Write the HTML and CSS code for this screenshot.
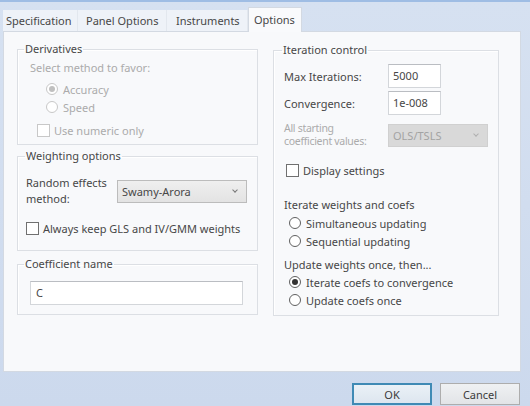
FILE: index.html
```html
<!DOCTYPE html>
<html>
<head>
    <meta charset="utf-8">
    <title>Options</title>
    <link rel="stylesheet" href="styles.css">
</head>
<body>
  <div class="dialog">
    <div class="tabs">
        <span class="tab">Specification</span>
        <span class="tab">Panel Options</span>
        <span class="tab">Instruments</span>
        <span class="tab active">Options</span>
    </div>

    <div class="panel">
        <div class="col left-col">
            <fieldset class="group deriv">
                <legend>Derivatives</legend>
                <div class="row disabled r-select">Select method to favor:</div>
                <div class="row disabled r-acc"><span class="radio on"></span>Accuracy</div>
                <div class="row disabled r-speed"><span class="radio"></span>Speed</div>
                <div class="row disabled r-numeric"><span class="check"></span>Use numeric only</div>
            </fieldset>

            <fieldset class="group weight">
                <legend>Weighting options</legend>
                <div class="row r-method">
                    <label class="two-line">Random effects<br>method:</label>
                    <div class="select">Swamy-Arora<span class="chev"></span></div>
                </div>
                <div class="row r-keep"><span class="check"></span>Always keep GLS and IV/GMM weights</div>
            </fieldset>

            <fieldset class="group coef">
                <legend>Coefficient name</legend>
                <div class="textbox wide">C</div>
            </fieldset>
        </div>

        <div class="col right-col">
            <fieldset class="group iter">
                <legend>Iteration control</legend>
                <div class="row r-max">
                    <label class="field-label">Max Iterations:</label>
                    <div class="textbox small">5000</div>
                </div>
                <div class="row r-conv">
                    <label class="field-label">Convergence:</label>
                    <div class="textbox small">1e-008</div>
                </div>
                <div class="row r-start">
                    <label class="field-label disabled tight">All starting<br>coefficient values:</label>
                    <div class="select off">OLS/TSLS<span class="chev"></span></div>
                </div>
                <div class="row r-display"><span class="check"></span>Display settings</div>

                <div class="row r-head1">Iterate weights and coefs</div>
                <div class="row opt"><span class="radio"></span>Simultaneous updating</div>
                <div class="row opt"><span class="radio"></span>Sequential updating</div>

                <div class="row r-head2">Update weights once, then...</div>
                <div class="row opt"><span class="radio on"></span>Iterate coefs to convergence</div>
                <div class="row opt"><span class="radio"></span>Update coefs once</div>
            </fieldset>
        </div>
    </div>

    <div class="buttons">
        <button class="btn default">OK</button>
        <button class="btn">Cancel</button>
    </div>
  </div>
</body>
</html>
```

FILE: styles.css
```css
body {
    margin: 0;
    font-family: "Noto Sans", "Open Sans", sans-serif;
    font-size: 11px;
    color: #474747;
}

.dialog {
    width: 530px;
    height: 406px;
    box-sizing: border-box;
    border-top: 2px solid #9fbde4;
    background: linear-gradient(#d6e1f1, #ccd9ed);
    overflow: hidden;
}

/* tab strip */
.tabs {
    display: flex;
    align-items: flex-end;
    height: 29px;
    margin-left: 3px;
}

.tab {
    height: 21px;
    line-height: 21px;
    padding: 0 5px;
    background-color: #eef2f8;
    border-right: 1px solid #e2e7ee;
}

.tab:nth-child(1) { width: 66px; padding-left: 3px; }
.tab:nth-child(2) { width: 75px; padding-left: 8px; }
.tab:nth-child(3) { width: 66px; padding-left: 9px; }

.tab.active {
    height: 24px;
    line-height: 23px;
    width: 42px;
    padding: 0 5px;
    margin-bottom: -1px;
    background-color: #f9fafc;
    border: 1px solid #d3d9e2;
    border-bottom: none;
    position: relative;
}

/* main panel */
.panel {
    display: flex;
    gap: 15px;
    width: 518px;
    height: 341px;
    box-sizing: border-box;
    margin-left: 3px;
    padding: 10px 0 0 13px;
    background-color: #f8f9fb;
    border: 1px solid #d3d9e2;
}

.left-col { width: 241px; }
.right-col { width: 226px; padding-top: 1px; }

.group {
    margin: 0;
    padding: 0;
    border: 1px solid #dcdfe4;
    box-shadow: inset 1px 1px 0 #ffffff;
    min-width: 0;
}

.group legend {
    padding: 0 1px;
    line-height: 14px;
}

.row {
    display: flex;
    align-items: center;
    height: 18px;
    white-space: nowrap;
}

.disabled { color: #ababab; }

/* derivatives */
.deriv { padding: 2px 0 5px 12px; height: 103px; box-sizing: border-box; }
.deriv legend { margin-left: -6px; }
.r-acc { margin-top: 4px; padding-left: 16px; }
.r-speed { padding-left: 16px; }
.r-numeric { margin-top: 5px; padding-left: 7px; }

/* weighting */
.weight { margin-top: 4px; padding: 12px 0 13px 8px; }
.weight legend { margin-left: -1px; }
.r-method { height: 32px; }
.two-line { width: 91px; line-height: 16px; }
.r-keep { margin-top: 12px; }

.coef { margin-top: 6px; padding: 10px 0 9px 12px; }
.coef legend { margin-left: -6px; }

/* right column */
.iter { padding: 7px 0 6px 10px; }
.iter legend { margin-left: -2px; }
.field-label { width: 104px; }
.tight { line-height: 13px; font-size: 10.5px; letter-spacing: -0.3px; }
.r-max, .r-conv { height: 24px; }
.r-conv { margin-top: 3px; }
.r-start { height: 26px; margin-top: 7px; }
.r-display { margin-top: 13px; padding-left: 2px; }
.r-head1 { margin-top: 16px; }
.r-head2 { margin-top: 5px; }
.opt { padding-left: 5px; }
.r-head1 + .opt { margin-top: 1px; }

/* controls */
.check {
    width: 11px;
    height: 11px;
    border: 1px solid #707070;
    background-color: #fff;
    margin-right: 4px;
}

.disabled .check { border-color: #c8c8c8; }

.radio {
    width: 10px;
    height: 10px;
    border: 1px solid #606060;
    border-radius: 50%;
    background-color: #fff;
    margin-right: 5px;
    position: relative;
}

.disabled .radio { border-color: #c8c8c8; }

.radio.on::after {
    content: "";
    position: absolute;
    left: 2px;
    top: 2px;
    width: 6px;
    height: 6px;
    border-radius: 50%;
    background-color: #333;
}

.disabled .radio.on::after { background-color: #c0c0c0; }

.textbox {
    box-sizing: border-box;
    height: 24px;
    line-height: 22px;
    padding-left: 4px;
    background-color: #fff;
    border: 1px solid #d3d6da;
    border-top-color: #babdc2;
}

.textbox.small { width: 53px; }
.textbox.wide { width: 213px; padding-left: 5px; }

.select {
    box-sizing: border-box;
    position: relative;
    width: 130px;
    height: 23px;
    line-height: 21px;
    padding-left: 4px;
    background: linear-gradient(#efefef, #e3e3e3);
    border: 1px solid #bcbcbc;
}

.select.off {
    width: 100px;
    color: #a3a3a3;
    background: #d9d9d9;
    border-color: #d0d0d0;
}

.chev {
    position: absolute;
    right: 9px;
    top: 7px;
    width: 3px;
    height: 3px;
    border-right: 1px solid #777;
    border-bottom: 1px solid #777;
    transform: rotate(45deg);
}

.select.off .chev { border-color: #b0b0b0; }

/* buttons */
.buttons {
    display: flex;
    justify-content: flex-end;
    gap: 8px;
    padding: 11px 10px 0 0;
}

.btn {
    width: 80px;
    height: 22px;
    font-family: inherit;
    font-size: 11px;
    color: #3b3b3b;
    background: linear-gradient(#eff1f3, #e2e4e7);
    border: 1px solid #adadad;
    padding: 0;
}

.btn.default {
    border: 2px solid #3f8ab5;
    background: linear-gradient(#eaf1f7, #dde6ef);
}
```
